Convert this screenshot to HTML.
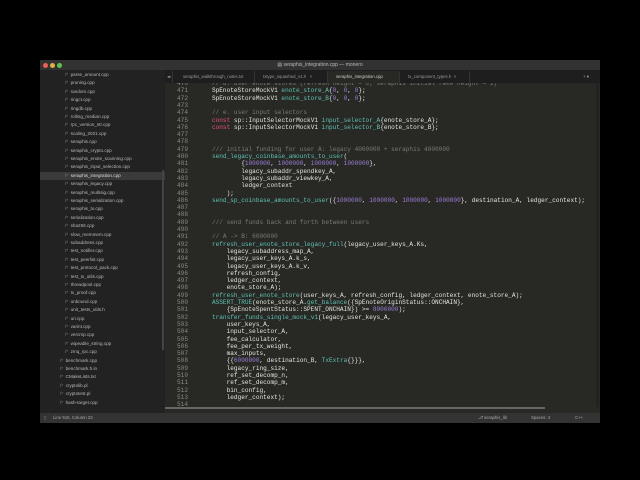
<!DOCTYPE html>
<html><head><meta charset="utf-8"><style>
*{margin:0;padding:0;box-sizing:border-box}
body{width:640px;height:480px;background:#000;position:relative;overflow:hidden;font-family:"Liberation Sans",sans-serif}
#win{position:absolute;left:40px;top:60px;width:560px;height:363px;background:#282824;overflow:hidden}
#title{position:absolute;left:0;top:0;width:560px;height:10px;background:#323232;color:#bbb;font-size:5px;text-align:center;line-height:10px}
.dot{position:absolute;top:2.5px;width:5px;height:5px;border-radius:50%}
#side{position:absolute;left:0;top:10px;width:125px;height:343px;background:#222222;overflow:hidden}
.it{position:absolute;height:8.4px;line-height:8.4px;font-size:4.6px;color:#b8b8b8;white-space:pre}
.it b{font-weight:normal;color:#888}
#sel{position:absolute;left:0;top:102px;width:125px;height:8px;background:#3a3a3a}
#sscroll{position:absolute;left:122px;top:100px;width:2px;height:180px;background:#444}
#tabs{position:absolute;left:125px;top:10px;width:435px;height:13px;background:#1e1e1e}
.tab{position:absolute;top:1px;height:12px;line-height:12px;font-size:4.3px;color:#999;padding-left:8px;border-right:1px solid #333}
#ed{position:absolute;left:125px;top:23px;width:432px;height:330px;overflow:hidden;background:#282824}
.ln{position:absolute;left:0;padding-left:25px;height:7.3px;line-height:7.3px;font-family:"Liberation Mono",monospace;font-size:6.1px;white-space:pre;color:#e6e6e0}
.num{position:absolute;left:0;width:23px;text-align:right;color:#8a8a82}
.f{color:#5fc2b4}.k{color:#e3587a}.n{color:#9d7fd9}.c{color:#7b7b72}
#status{position:absolute;left:0;top:353px;width:560px;height:10px;background:#333334;color:#aaa;font-size:4.3px;line-height:10px}
#hs{position:absolute;left:125px;top:347px;width:380px;height:2px;background:#666}
#vs{position:absolute;left:556px;top:23px;width:3px;height:324px;background:#222}
</style></head><body>
<div id="win">
<div id="title">▤ seraphis_integration.cpp — monero
<div class="dot" style="left:3px;background:#ec5f57"></div>
<div class="dot" style="left:10px;background:#e0b13d"></div>
<div class="dot" style="left:17px;background:#5fc24f"></div>
</div>
<div id="side">
<div id="sel"></div>
<div id="sscroll"></div>
<div class="it" style="left:25px;top:1px"><b>/* </b> parse_amount.cpp</div>
<div class="it" style="left:25px;top:9.4px"><b>/* </b> pruning.cpp</div>
<div class="it" style="left:25px;top:17.8px"><b>/* </b> random.cpp</div>
<div class="it" style="left:25px;top:26.2px"><b>/* </b> ringct.cpp</div>
<div class="it" style="left:25px;top:34.6px"><b>/* </b> ringdb.cpp</div>
<div class="it" style="left:25px;top:43px"><b>/* </b> rolling_median.cpp</div>
<div class="it" style="left:25px;top:51.4px"><b>/* </b> rpc_version_str.cpp</div>
<div class="it" style="left:25px;top:59.8px"><b>/* </b> scaling_2021.cpp</div>
<div class="it" style="left:25px;top:68.2px"><b>/* </b> seraphis.cpp</div>
<div class="it" style="left:25px;top:76.6px"><b>/* </b> seraphis_crypto.cpp</div>
<div class="it" style="left:25px;top:85px"><b>/* </b> seraphis_enote_scanning.cpp</div>
<div class="it" style="left:25px;top:93.4px"><b>/* </b> seraphis_input_selection.cpp</div>
<div class="it" style="left:25px;top:101.8px;color:#ddd"><b>/* </b> seraphis_integration.cpp</div>
<div class="it" style="left:25px;top:110.2px"><b>/* </b> seraphis_legacy.cpp</div>
<div class="it" style="left:25px;top:118.6px"><b>/* </b> seraphis_multisig.cpp</div>
<div class="it" style="left:25px;top:127px"><b>/* </b> seraphis_serialization.cpp</div>
<div class="it" style="left:25px;top:135.4px"><b>/* </b> seraphis_tx.cpp</div>
<div class="it" style="left:25px;top:143.8px"><b>/* </b> serialization.cpp</div>
<div class="it" style="left:25px;top:152.2px"><b>/* </b> sha256.cpp</div>
<div class="it" style="left:25px;top:160.6px"><b>/* </b> slow_memmem.cpp</div>
<div class="it" style="left:25px;top:169px"><b>/* </b> subaddress.cpp</div>
<div class="it" style="left:25px;top:177.4px"><b>/* </b> test_notifier.cpp</div>
<div class="it" style="left:25px;top:185.8px"><b>/* </b> test_peerlist.cpp</div>
<div class="it" style="left:25px;top:194.2px"><b>/* </b> test_protocol_pack.cpp</div>
<div class="it" style="left:25px;top:202.6px"><b>/* </b> test_tx_utils.cpp</div>
<div class="it" style="left:25px;top:211px"><b>/* </b> threadpool.cpp</div>
<div class="it" style="left:25px;top:219.4px"><b>/* </b> tx_proof.cpp</div>
<div class="it" style="left:25px;top:227.8px"><b>/* </b> unbound.cpp</div>
<div class="it" style="left:25px;top:236.2px"><b>/* </b> unit_tests_utils.h</div>
<div class="it" style="left:25px;top:244.6px"><b>/* </b> uri.cpp</div>
<div class="it" style="left:25px;top:253px"><b>/* </b> varint.cpp</div>
<div class="it" style="left:25px;top:261.4px"><b>/* </b> vercmp.cpp</div>
<div class="it" style="left:25px;top:269.8px"><b>/* </b> wipeable_string.cpp</div>
<div class="it" style="left:25px;top:278.2px"><b>/* </b> zmq_rpc.cpp</div>
<div class="it" style="left:20px;top:286.6px"><b>/* </b> benchmark.cpp</div>
<div class="it" style="left:20px;top:295px"><b>/* </b> benchmark.h.in</div>
<div class="it" style="left:20px;top:303.4px"><b>/* </b> CMakeLists.txt</div>
<div class="it" style="left:20px;top:311.8px"><b>/* </b> cryptolib.pl</div>
<div class="it" style="left:20px;top:320.2px"><b>/* </b> cryptotest.pl</div>
<div class="it" style="left:20px;top:328.6px"><b>/* </b> hash-target.cpp</div>
</div>
<div id="tabs">
<div class="tab" style="left:0;width:8px;padding-left:2px;color:#888">◂▸</div>
<div class="tab" style="left:10px;width:80px">seraphis_walkthrough_notes.txt</div>
<div class="tab" style="left:90px;width:73px">txtype_squashed_v1.h &nbsp; ×</div>
<div class="tab" style="left:163px;width:72px;background:#282824;color:#ccc">seraphis_integration.cpp</div>
<div class="tab" style="left:235px;width:70px">tx_component_types.h &nbsp;×</div>
<div class="tab" style="left:410px;border:none;color:#aaa">+ ▾</div>
</div>
<div id="ed">
<div class="ln" style="top:-3px"><span class="num">470</span>      <span class="c">// d. user enote stores (refresh height = 0; seraphis initial fake height = 1)</span></div>
<div class="ln" style="top:4.3px"><span class="num">471</span>      SpEnoteStoreMockV1 <span class="f">enote_store_A</span>{<span class="n">0</span>, <span class="n">0</span>, <span class="n">0</span>};</div>
<div class="ln" style="top:11.6px"><span class="num">472</span>      SpEnoteStoreMockV1 <span class="f">enote_store_B</span>{<span class="n">0</span>, <span class="n">0</span>, <span class="n">0</span>};</div>
<div class="ln" style="top:18.9px"><span class="num">473</span></div>
<div class="ln" style="top:26.2px"><span class="num">474</span>      <span class="c">// e. user input selectors</span></div>
<div class="ln" style="top:33.5px"><span class="num">475</span>      <span class="k">const</span> sp::InputSelectorMockV1 <span class="f">input_selector_A</span>{enote_store_A};</div>
<div class="ln" style="top:40.8px"><span class="num">476</span>      <span class="k">const</span> sp::InputSelectorMockV1 <span class="f">input_selector_B</span>{enote_store_B};</div>
<div class="ln" style="top:48.1px"><span class="num">477</span></div>
<div class="ln" style="top:55.4px"><span class="num">478</span></div>
<div class="ln" style="top:62.7px"><span class="num">479</span>      <span class="c">/// initial funding for user A: legacy 4000000 + seraphis 4000000</span></div>
<div class="ln" style="top:70px"><span class="num">480</span>      <span class="f">send_legacy_coinbase_amounts_to_user</span>(</div>
<div class="ln" style="top:77.3px"><span class="num">481</span>              {<span class="n">1000000</span>, <span class="n">1000000</span>, <span class="n">1000000</span>, <span class="n">1000000</span>},</div>
<div class="ln" style="top:84.6px"><span class="num">482</span>              legacy_subaddr_spendkey_A,</div>
<div class="ln" style="top:91.9px"><span class="num">483</span>              legacy_subaddr_viewkey_A,</div>
<div class="ln" style="top:99.2px"><span class="num">484</span>              ledger_context</div>
<div class="ln" style="top:106.5px"><span class="num">485</span>          );</div>
<div class="ln" style="top:113.8px"><span class="num">486</span>      <span class="f">send_sp_coinbase_amounts_to_user</span>({<span class="n">1000000</span>, <span class="n">1000000</span>, <span class="n">1000000</span>, <span class="n">1000000</span>}, destination_A, ledger_context);</div>
<div class="ln" style="top:121.1px"><span class="num">487</span></div>
<div class="ln" style="top:128.4px"><span class="num">488</span></div>
<div class="ln" style="top:135.7px"><span class="num">489</span>      <span class="c">/// send funds back and forth between users</span></div>
<div class="ln" style="top:143px"><span class="num">490</span></div>
<div class="ln" style="top:150.3px"><span class="num">491</span>      <span class="c">// A -&gt; B: 6000000</span></div>
<div class="ln" style="top:157.6px"><span class="num">492</span>      <span class="f">refresh_user_enote_store_legacy_full</span>(legacy_user_keys_A.Ks,</div>
<div class="ln" style="top:164.9px"><span class="num">493</span>          legacy_subaddress_map_A,</div>
<div class="ln" style="top:172.2px"><span class="num">494</span>          legacy_user_keys_A.k_s,</div>
<div class="ln" style="top:179.5px"><span class="num">495</span>          legacy_user_keys_A.k_v,</div>
<div class="ln" style="top:186.8px"><span class="num">496</span>          refresh_config,</div>
<div class="ln" style="top:194.1px"><span class="num">497</span>          ledger_context,</div>
<div class="ln" style="top:201.4px"><span class="num">498</span>          enote_store_A);</div>
<div class="ln" style="top:208.7px"><span class="num">499</span>      <span class="f">refresh_user_enote_store</span>(user_keys_A, refresh_config, ledger_context, enote_store_A);</div>
<div class="ln" style="top:216px"><span class="num">500</span>      <span class="f">ASSERT_TRUE</span>(enote_store_A.<span class="f">get_balance</span>({SpEnoteOriginStatus::ONCHAIN},</div>
<div class="ln" style="top:223.3px"><span class="num">501</span>          {SpEnoteSpentStatus::SPENT_ONCHAIN}) &gt;= <span class="n">8000000</span>);</div>
<div class="ln" style="top:230.6px"><span class="num">502</span>      <span class="f">transfer_funds_single_mock_v1</span>(legacy_user_keys_A,</div>
<div class="ln" style="top:237.9px"><span class="num">503</span>          user_keys_A,</div>
<div class="ln" style="top:245.2px"><span class="num">504</span>          input_selector_A,</div>
<div class="ln" style="top:252.5px"><span class="num">505</span>          fee_calculator,</div>
<div class="ln" style="top:259.8px"><span class="num">506</span>          fee_per_tx_weight,</div>
<div class="ln" style="top:267.1px"><span class="num">507</span>          max_inputs,</div>
<div class="ln" style="top:274.4px"><span class="num">508</span>          {{<span class="n">6000000</span>, destination_B, <span class="f">TxExtra</span>{}}},</div>
<div class="ln" style="top:281.7px"><span class="num">509</span>          legacy_ring_size,</div>
<div class="ln" style="top:289px"><span class="num">510</span>          ref_set_decomp_n,</div>
<div class="ln" style="top:296.3px"><span class="num">511</span>          ref_set_decomp_m,</div>
<div class="ln" style="top:303.6px"><span class="num">512</span>          bin_config,</div>
<div class="ln" style="top:310.9px"><span class="num">513</span>          ledger_context);</div>
<div class="ln" style="top:318.2px"><span class="num">514</span></div>
</div>
<div id="hs"></div>
<div id="vs"></div>
<div id="status"><span style="position:absolute;left:4px;color:#888">▯</span><span style="position:absolute;left:13px">Line 515, Column 23</span><span style="position:absolute;left:438px">⎇ seraphis_lib</span><span style="position:absolute;left:491px">Spaces: 4</span><span style="position:absolute;left:535px">C++</span></div>
</div>
</body></html>
